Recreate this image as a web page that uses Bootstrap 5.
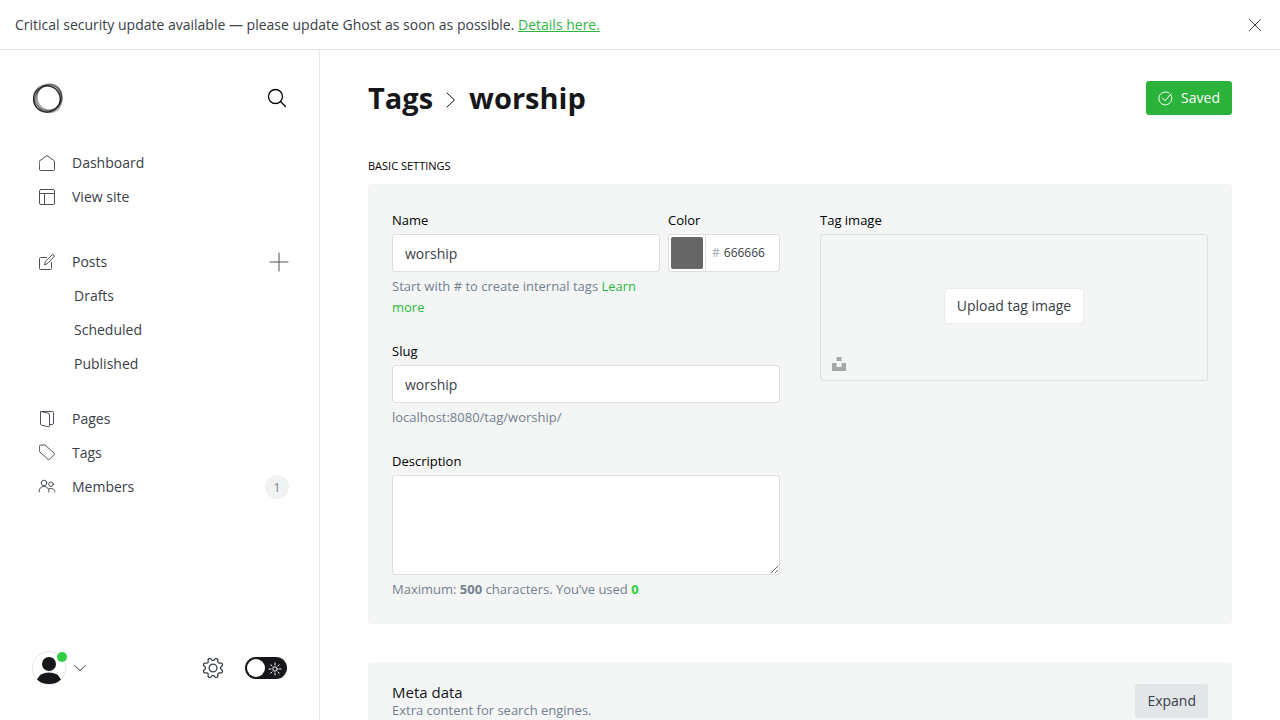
<!DOCTYPE html>
<html lang="en">
<head>
<meta charset="utf-8">
<meta name="viewport" content="width=device-width, initial-scale=1">
<title>Tags - worship</title>
<link href="https://cdn.jsdelivr.net/npm/bootstrap@5.3.0/dist/css/bootstrap.min.css" rel="stylesheet">
<style>
  :root { --ink: #15171a; --text: #394047; --muted: #738091; --green: #2bba3c; --line: #dddfdf; }
  body { font-family: "Open Sans", "Noto Sans", sans-serif; font-size: 14px; line-height: 20px; color: var(--text); background: #fff; }
  svg { display: block; fill: none; stroke: currentColor; stroke-width: 1; stroke-linecap: round; stroke-linejoin: round; flex: none; }
  svg.bold-line { stroke-width: 1.3; }
  svg.solid { fill: currentColor; stroke: none; }
  .update-bar { min-height: 50px; padding: 0 15px; border-bottom: 1px solid #dfe1e3; }
  .update-bar a { color: #30b43f; }
  .icon-btn { border: 0; background: none; padding: 0; color: var(--text); }
  .side { width: 320px; border-right: 1px solid #e5e7e9; padding: 32px 30px 35px 32px; }
  .side-nav svg { opacity: .9; }
  .side-nav a { color: var(--text); text-decoration: none; min-height: 34px; padding-left: 6px; gap: 16px; }
  .side-nav .sub-link { padding-left: 42px; }
  .side-head { margin-bottom: 32px; padding-right: 2px; }
  .side-foot { padding-right: 2px; }
  .side-foot .gear-link { color: var(--text); margin-right: 21px; }
  .group-posts { margin-top: 31px; margin-bottom: 21px; }
  .count { width: 24px; height: 24px; background: #f1f2f4; color: #7c8694; font-size: 13px; }
  .avatar { width: 34px; height: 34px; border: 1px solid #e3e6e8; color: var(--ink); }
  .dot { width: 10px; height: 10px; background: #30cf43; top: 0; right: -2px; }
  .night { width: 42px; height: 22px; appearance: none; margin: 0; border: 0; border-radius: 11px; background: var(--ink); }
  .night-wrap .knob { width: 18px; height: 18px; background: #fff; left: 2px; top: 2px; pointer-events: none; }
  .night-wrap svg { right: 5px; top: 5px; color: #fff; pointer-events: none; }
  .content-pane { padding: 31px 48px 48px; overflow: auto; scrollbar-width: none; }
  .content-pane::-webkit-scrollbar { display: none; }
  h1 { font-size: 29px; line-height: 34px; font-weight: 700; color: var(--ink); gap: 13px; }
  h1 a { color: inherit; text-decoration: none; }
  .act { height: 34px; border: 0; border-radius: 3px; padding: 0 12px; font-size: 14px; line-height: 20px; }
  .act-save { background: #2ab23a; color: #fff; gap: 8px; }
  .act-save:hover { background: #259c33; color: #fff; }
  .act-gray { background: #e3e6e9; color: var(--text); }
  .act-white { background: #fff; color: var(--text); box-shadow: 0 0 2px rgba(0,0,0,.14); }
  .section-title { font-size: 11px; line-height: 16px; color: #000; font-weight: 400; margin: 43px 0 10px; }
  .panel { background: #f4f6f5; border-radius: 4px; padding: 24px; }
  .split { --bs-gutter-x: 40px; --bs-gutter-y: 24px; }
  .panel label, .caption { display: block; color: #000; font-size: 13px; line-height: 24px; margin-bottom: 2px; }
  .panel .form-control { height: 38px; border: 1px solid var(--line); border-radius: 3px; padding: 0 12px; font-size: 14px; color: var(--text); }
  .panel textarea.form-control { height: 100px; padding: 8px 12px; }
  .note { font-size: 13px; line-height: 21px; color: var(--muted); margin: 4px 0 0; }
  .note a { color: var(--green); text-decoration: none; }
  .note .used { color: #30cf43; }
  .field { margin-bottom: 21px; }
  .color-field { width: 112px; }
  .color-box { height: 38px; border: 1px solid var(--line); border-radius: 3px; background: #fff; }
  .swatch { width: 36px; height: 36px; padding: 2px; border: 0; background: none; appearance: none; }
  .swatch::-webkit-color-swatch-wrapper { padding: 0; }
  .swatch::-webkit-color-swatch { border: 0; border-radius: 2px; }
  .hash { border-left: 1px solid var(--line); padding-left: 6px; font-size: 12px; color: #a5adb8; }
  .hex { border: 0; outline: 0; padding: 0; width: 50px; margin-left: 4px; font-size: 12px; color: var(--text); }
  .drop { height: 147px; border: 1px solid var(--line); border-radius: 3px; }
  .unsplash { left: 11px; bottom: 9px; color: #a6a8a7; }
  .meta-panel { margin-top: 38px; padding-top: 22px; }
  .meta-panel h2 { font-size: 15px; line-height: 16px; font-weight: 500; color: var(--ink); margin: 0; }
  @media (max-width: 767px) { .side { width: 220px; } .content-pane { padding: 24px 16px; } }
</style>
</head>
<body class="vh-100 d-flex flex-column overflow-hidden">
<div class="update-bar d-flex align-items-center justify-content-between" role="alert">
  <div>Critical security update available — please update Ghost as soon as possible. <a href="#">Details here.</a></div>
  <button class="icon-btn" aria-label="Dismiss"><svg width="20" height="20" viewBox="0 0 20 20"><path d="M4.500 4.500l11 11M15.500 4.500l-11 11"/></svg></button>
</div>
<div class="d-flex flex-grow-1 overflow-hidden">
  <aside class="side d-flex flex-column flex-shrink-0">
    <div class="side-head d-flex align-items-center justify-content-between">
      <a href="#" aria-label="Site"><svg width="32" height="32" viewBox="0 0 32 32"><g stroke="#222"><ellipse cx="15" cy="17" rx="13.500" ry="13" stroke-width="1.200"/><ellipse cx="16" cy="16.500" rx="14.500" ry="12.500" transform="rotate(-50 16 16.500)" stroke-width="1.600" opacity=".55"/><ellipse cx="17.500" cy="15" rx="12.500" ry="13" stroke-width="1.400" opacity=".4"/><ellipse cx="15" cy="16" rx="13.500" ry="12.200" transform="rotate(40 15 16)" stroke-width="1" opacity=".6"/><ellipse cx="17" cy="17" rx="13.500" ry="12.800" transform="rotate(70 17 17)" opacity=".4" stroke-width="1.600"/></g></svg></a>
      <button class="icon-btn text-black" aria-label="Search"><svg class="bold-line" width="20" height="20" viewBox="0 0 20 20"><circle cx="8.500" cy="8.500" r="7"/><path d="M13.500 13.500l5 5"/></svg></button>
    </div>
    <nav class="side-nav d-flex flex-column">
      <a href="#" class="d-flex align-items-center"><svg width="18" height="18" viewBox="0 0 18 18"><path d="M1.500 7L9 1.500 16.500 7v8.500q0 1-1 1h-13q-1 0-1-1z"/></svg>Dashboard</a>
      <a href="#" class="d-flex align-items-center"><svg width="18" height="18" viewBox="0 0 18 18"><rect x="1.500" y="1.500" width="15" height="15" rx="1.500"/><path d="M1.500 5.500h15M6.500 5.500v11"/></svg>View site</a>
      <div class="group-posts">
        <div class="d-flex align-items-center justify-content-between">
          <a href="#" class="d-flex align-items-center"><svg width="18" height="18" viewBox="0 0 18 18"><path d="M8.500 4.500h-6q-1 0-1 1v10q0 1 1 1h10q1 0 1-1v-6M6.500 11.500l.8-3L14 2q.9-.9 1.900 0t0 2l-6.500 6.500z"/></svg>Posts</a>
          <button class="icon-btn" aria-label="New post"><svg width="20" height="20" viewBox="0 0 20 20"><path d="M10 1v18M1 10h18"/></svg></button>
        </div>
        <a href="#" class="sub-link d-flex align-items-center">Drafts</a>
        <a href="#" class="sub-link d-flex align-items-center">Scheduled</a>
        <a href="#" class="sub-link d-flex align-items-center">Published</a>
      </div>
      <a href="#" class="d-flex align-items-center"><svg width="18" height="18" viewBox="0 0 18 18"><path d="M3 1.500h11.500q1 0 1 1v10.500q0 1.500-1.500 1.500h-2M3 1.500l6.500 1.500q2 .4 2 2v11q0 1-1 .8l-7-1.600q-1-.3-1-1.300V2q0-.5.500-.5z"/></svg>Pages</a>
      <a href="#" class="d-flex align-items-center"><svg width="18" height="18" viewBox="0 0 18 18"><path d="M1.500 2q0-1 1-1H7l9.300 8.300q.5.600 0 1.200l-5 5q-.6.500-1.200 0L1.500 7.500z"/></svg>Tags</a>
      <a href="#" class="d-flex align-items-center"><svg width="18" height="18" viewBox="0 0 18 18"><circle cx="6" cy="5" r="2.800"/><circle cx="13" cy="6.200" r="2.300"/><path d="M1 14q0-5.500 5-5.500t5 5.500M11 10.800q5.500-1.600 6 3.200"/></svg>Members<span class="count rounded-circle d-flex align-items-center justify-content-center ms-auto">1</span></a>
    </nav>
    <div class="side-foot d-flex align-items-center mt-auto">
      <button class="icon-btn d-flex align-items-center gap-2" aria-label="Account">
        <span class="avatar rounded-circle position-relative"><svg class="solid" width="32" height="32" viewBox="0 0 32 32"><circle cx="16" cy="12" r="7"/><path d="M4 27.500q3-7 12-7t12 7q-4.500 4.500-12 4.500T4 27.500z"/></svg><span class="dot rounded-circle position-absolute"></span></span>
        <svg width="12" height="12" viewBox="0 0 12 12"><path d="M.5 3.500L6 8.500l5.500-5"/></svg>
      </button>
      <a href="#" class="gear-link ms-auto" aria-label="Settings"><svg class="bold-line" width="22" height="22" viewBox="0 0 22 22"><circle cx="11" cy="11" r="3.900"/><path id="gear"/></svg></a>
      <label class="night-wrap position-relative d-block"><input type="checkbox" role="switch" class="night d-block" aria-label="Night mode"><span class="knob rounded-circle position-absolute"></span><svg class="position-absolute" width="14" height="14" viewBox="0 0 14 14"><circle cx="7" cy="7" r="2.200"/><path d="M7 1v2M7 11v2M1 7h2M11 7h2M2.800 2.800l1.300 1.300M9.900 9.900l1.300 1.300M2.800 11.200l1.300-1.300M9.900 4.100l1.300-1.300"/></svg></label>
    </div>
  </aside>
  <main class="content-pane flex-grow-1">
    <header class="d-flex align-items-center justify-content-between">
      <h1 class="d-flex align-items-center m-0"><a href="#">Tags</a><svg class="mt-1" width="10" height="16" viewBox="0 0 10 16"><path d="M1 1l7.500 7L1 15"/></svg>worship</h1>
      <button class="act act-save btn d-flex align-items-center"><svg width="15" height="15" viewBox="0 0 15 15"><path d="M13.200 4.500A6.500 6.500 0 1 1 11 2M4.500 7l2.600 2.800 6-7"/></svg>Saved</button>
    </header>
    <h2 class="section-title text-uppercase">Basic settings</h2>
    <section class="panel">
      <form class="row split">
        <div class="col-12 col-md-6">
          <div class="field d-flex gap-2">
            <div class="flex-fill">
              <label for="tag-name">Name</label>
              <input id="tag-name" class="form-control" value="worship">
              <p class="note">Start with # to create internal tags <a href="#">Learn more</a></p>
            </div>
            <div class="color-field flex-shrink-0">
              <label for="tag-hex">Color</label>
              <div class="color-box d-flex align-items-center">
                <input type="color" class="swatch" value="#666666" aria-label="Pick color">
                <span class="hash align-self-stretch d-flex align-items-center">#</span>
                <input id="tag-hex" class="hex" value="666666">
              </div>
            </div>
          </div>
          <div class="field">
            <label for="tag-slug">Slug</label>
            <input id="tag-slug" class="form-control" value="worship">
            <p class="note">localhost:8080/tag/worship/</p>
          </div>
          <label for="tag-desc">Description</label>
          <textarea id="tag-desc" class="form-control"></textarea>
          <p class="note">Maximum: <b>500</b> characters. You’ve used <b class="used">0</b></p>
        </div>
        <div class="col-12 col-md-6">
          <span class="caption">Tag image</span>
          <div class="drop position-relative d-flex align-items-center justify-content-center">
            <button type="button" class="act act-white btn mb-1">Upload tag image</button>
            <a href="#" class="unsplash position-absolute" aria-label="Unsplash"><svg class="solid" width="14" height="14" viewBox="0 0 14 14"><path d="M4.500 0h5v4h-5zM0 6h4.500v4h5V6H14v8H0z"/></svg></a>
          </div>
        </div>
      </form>
    </section>
    <section class="panel meta-panel d-flex align-items-start justify-content-between">
      <div><h2>Meta data</h2><p class="note m-0">Extra content for search engines.</p></div>
      <button class="act act-gray btn">Expand</button>
    </section>
  </main>
</div>
<script src="https://cdn.jsdelivr.net/npm/bootstrap@5.3.0/dist/js/bootstrap.bundle.min.js"></script>
<script>
  // Eight-toothed gear outline for the settings icon
  const pts = [];
  for (let i = 0; i < 96; i++) {
    const a = i / 96 * Math.PI * 2, r = 8.8 + 1.4 * Math.tanh(1.6 * Math.cos(8 * a + Math.PI));
    pts.push((11 + r * Math.cos(a)).toFixed(2) + ' ' + (11 + r * Math.sin(a)).toFixed(2));
  }
  document.getElementById('gear').setAttribute('d', 'M' + pts.join('L') + 'z');
</script>
</body>
</html>
